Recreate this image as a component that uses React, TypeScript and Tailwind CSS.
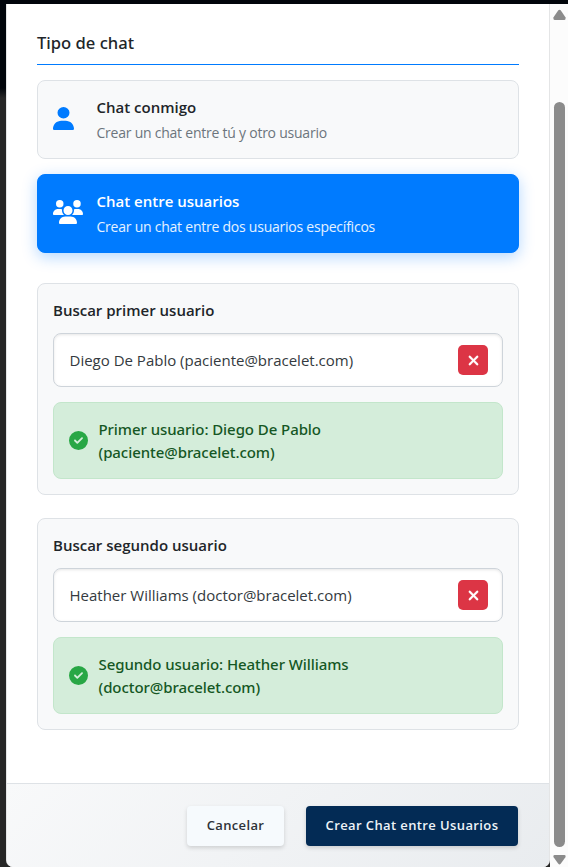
import React from 'react';
import { FaUser, FaUsers, FaCircleCheck, FaXmark } from 'react-icons/fa6';

type OptionProps = { icon: React.ReactNode; title: string; text: string; active?: boolean };

function ChatOption({ icon, title, text, active }: OptionProps) {
  return (
    <div
      className={
        'flex h-[79px] items-center rounded-lg border pl-[15px] ' +
        (active
          ? 'border-[#007bff] bg-[#007bff] text-white shadow-[0_4px_15px_rgba(0,123,255,0.3)]'
          : 'border-[#dee2e6] bg-[#f8f9fa] text-[#212529]')
      }
    >
      <div className={'w-[43.5px] shrink-0 pb-[3px] ' + (active ? 'text-white' : 'text-[#007bff]')}>{icon}</div>
      <div className="whitespace-nowrap">
        <div className="h-[25px] text-[15px] leading-[25px] font-semibold">{title}</div>
        <div className={'h-[25px] text-[14px] leading-[25px] tracking-[-0.235px] ' + (active ? 'text-white/90' : 'text-[#6c757d]')}>
          {text}
        </div>
      </div>
    </div>
  );
}

type SearchProps = { label: string; value: string; order: string; name: string; email: string };

function UserSearch({ label, value, order, name, email }: SearchProps) {
  return (
    <section className="h-[212px] rounded-lg border border-[#dee2e6] bg-[#f8f9fa] px-[15px] pt-[15px]">
      <div className="h-[34px] text-[15px] leading-[23px] font-semibold text-[#212529]">{label}</div>
      <div className="flex h-[54px] items-center justify-between rounded-lg border border-[#ced4da] bg-white pr-[14px] pl-[15.5px] shadow-[inset_0_1px_3px_rgba(0,0,0,0.1)]">
        <span className="text-[15px] whitespace-nowrap text-[#343a40]">{value}</span>
        <button className="flex size-[30px] items-center justify-center rounded-[5px] bg-[#dc3545] text-white">
          <FaXmark className="size-[15px] stroke-white stroke-[14px]" />
        </button>
      </div>
      <div className="mt-[15px] flex h-[77px] items-center rounded-lg border border-[#c3e6cb] bg-[#d4edda] pl-[15px]">
        <FaCircleCheck className="size-[19px] shrink-0 text-[#28a745]" />
        <div className="ml-[10.5px] font-['Noto_Sans',sans-serif] text-[15px] leading-[23px] font-medium tracking-[-0.07px] whitespace-nowrap text-[#155724]">
          <div>{order} usuario: {name}</div>
          <div>({email})</div>
        </div>
      </div>
    </section>
  );
}

function Scrollbar() {
  return (
    <div className="flex w-[18px] shrink-0 flex-col items-center bg-[#fcfcfc]">
      <svg className="mt-[5px] h-[11px] w-[13px]" viewBox="0 0 13 11" fill="#8b8b8b">
        <path d="M5.3 1.3Q6.5 0 7.7 1.3L12.6 8.6Q13 11 11.5 11H1.5Q0 11 .4 8.6Z" />
      </svg>
      <div className="mt-[82px] h-[745px] w-[11px] rounded-full bg-[#8b8b8b]" />
      <svg className="mt-2 h-[10px] w-[13px]" viewBox="0 0 13 10" fill="#8b8b8b">
        <path d="M1.5 0H11.5Q13 0 12.6 2L7.7 8.8Q6.5 10 5.3 8.8L.4 2Q0 0 1.5 0Z" />
      </svg>
    </div>
  );
}

export default function App() {
  return (
    <div className="flex h-[867px] w-[568px] flex-col overflow-hidden bg-[linear-gradient(#01050b_0,#01050b_88px,#262626_98px,#262626_100%)] font-['Open_Sans',sans-serif]">
      <div className="h-1 shrink-0" />
      <div className="flex flex-1 pl-[6px]">
        <div className="w-[544px] bg-[linear-gradient(to_right,transparent_50%,#262626_50%)]">
          <div className="flex h-full flex-col overflow-hidden rounded-b-[7px] border-x border-[#e4e5e6] bg-white">
            <main className="h-[779px] px-[30px] pt-[25px]">
              <h2 className="h-9 border-b border-[#007bff] font-['Noto_Sans',sans-serif] text-[16.6px] leading-7 font-medium text-[#212529]">Tipo de chat</h2>
              <div className="mt-[15px] flex flex-col gap-[15px]">
                <ChatOption icon={<FaUser preserveAspectRatio="none" className="h-[23px] w-[21px]" />} title="Chat conmigo" text="Crear un chat entre tú y otro usuario" />
                <ChatOption icon={<FaUsers className="h-6 w-[30px]" />} title="Chat entre usuarios" text="Crear un chat entre dos usuarios específicos" active />
              </div>
              <div className="mt-[30px] flex flex-col gap-[23px]">
                <UserSearch label="Buscar primer usuario" value="Diego De Pablo (paciente@bracelet.com)" order="Primer" name="Diego De Pablo" email="paciente@bracelet.com" />
                <UserSearch label="Buscar segundo usuario" value="Heather Williams (doctor@bracelet.com)" order="Segundo" name="Heather Williams" email="doctor@bracelet.com" />
              </div>
            </main>
            <footer className="flex flex-1 justify-end gap-[22px] border-t border-[#dee2e6] bg-linear-135 from-[#f8f9fa] to-[#e9ecef] pt-[22px] pr-[31px]">
              <button className="h-10 w-[97px] rounded bg-[#f6fafd] text-[13px] font-semibold tracking-[0.35px] text-[#2d3238] shadow-[0_2px_4px_rgba(0,0,0,0.15)]">Cancelar</button>
              <button className="h-10 w-[212px] rounded bg-[#032b55] text-[13px] font-semibold tracking-[0.39px] whitespace-nowrap text-[#eef3f8] shadow-[0_2px_4px_rgba(0,0,0,0.15)]">Crear Chat entre Usuarios</button>
            </footer>
          </div>
        </div>
        <Scrollbar />
      </div>
    </div>
  );
}
